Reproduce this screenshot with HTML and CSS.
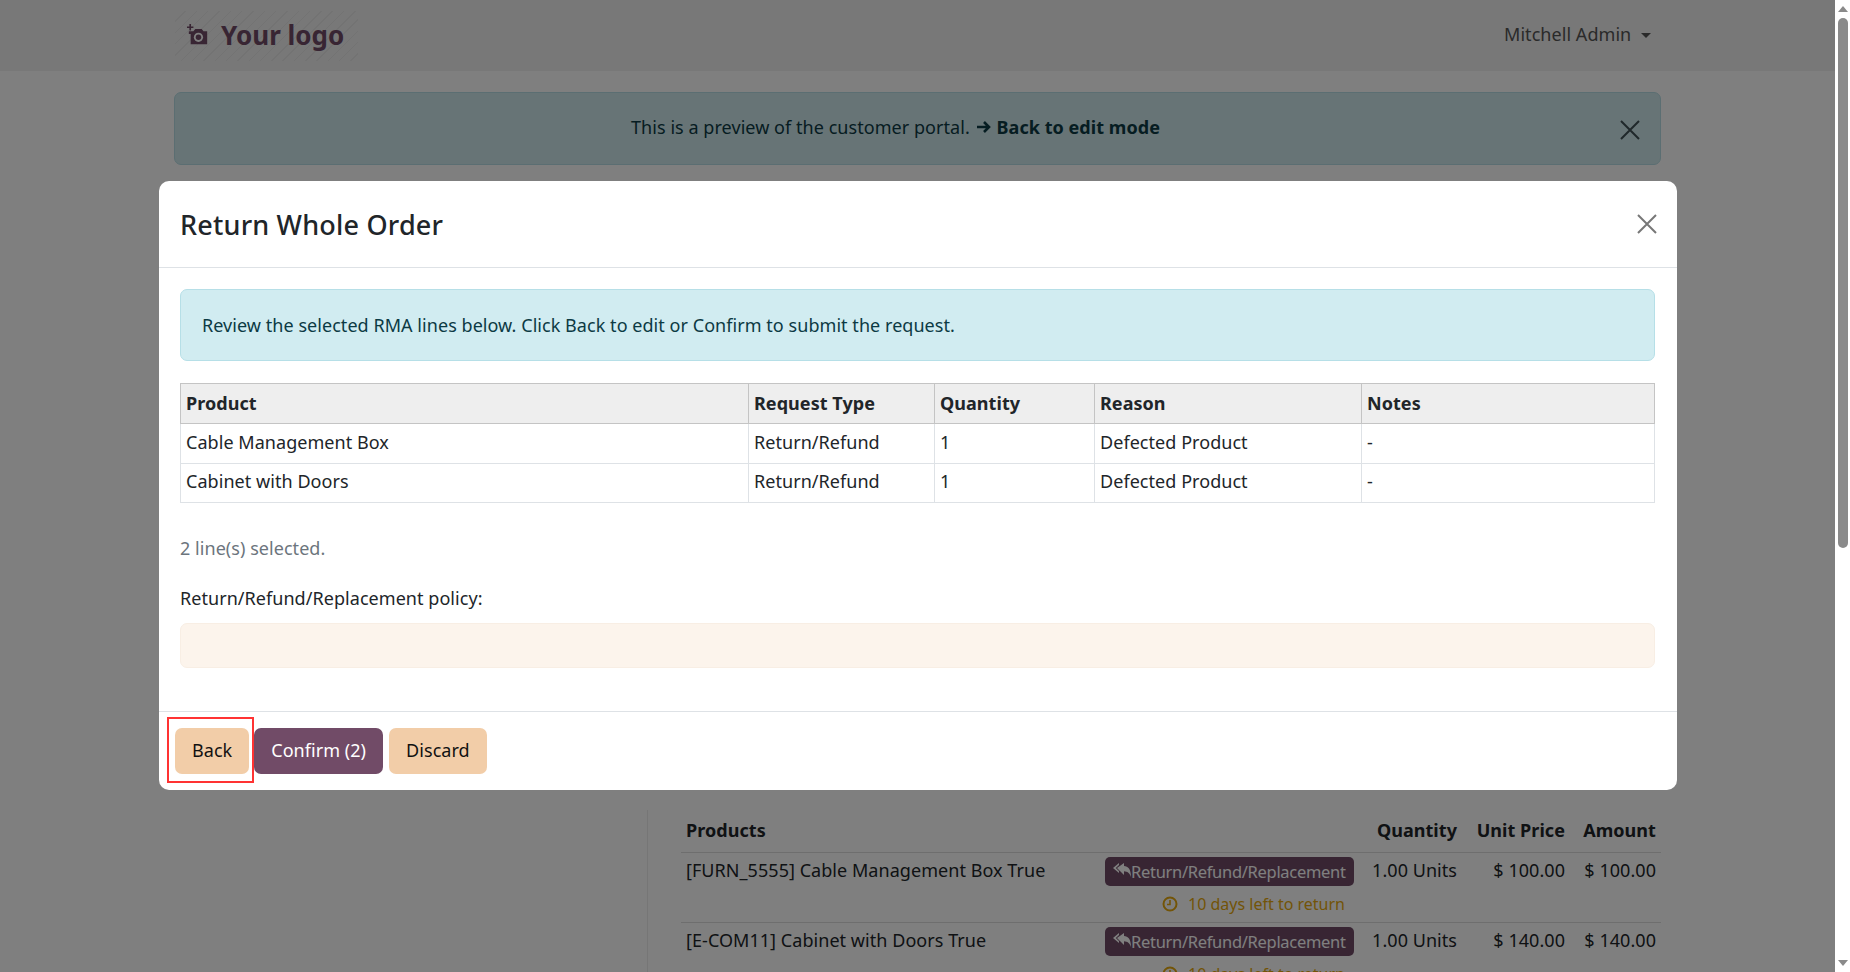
FILE: index.html
```html
<!DOCTYPE html>
<html>
<head>
    <title>Return Whole Order</title>
    <link rel="stylesheet" href="styles.css">
</head>
<body>
    <div class="viewport">
        <div class="page">
            <header class="navbar">
                <div class="logo">
                    <svg class="logo-icon" viewBox="0 0 24 24">
                        <path d="M2 8h5l2-2.500h7l2 2.500h4v14H4v-11H2z" fill="#714b67"/>
                        <path d="M0 3.500h7M3.500 0v7" stroke="#714b67" stroke-width="1.800" fill="none"/>
                        <circle cx="12.500" cy="14.500" r="5" fill="#fff"/>
                        <circle cx="12.500" cy="14.500" r="3" fill="#714b67"/>
                    </svg>
                    <span>Your logo</span>
                </div>
                <div class="user-menu">Mitchell Admin <span class="caret"></span></div>
            </header>

            <div class="preview-alert">
                <span>This is a preview of the customer portal.</span>
                <a class="preview-link">
                    <svg class="arrow-icon" viewBox="0 0 16 14"><path d="M1 7h12M8 2l5 5-5 5" stroke="#0c3a44" stroke-width="2.600" fill="none"/></svg>
                    Back to edit mode
                </a>
                <svg class="close-icon alert-close" viewBox="0 0 20 20"><path d="M1 1l18 18M19 1L1 19" stroke="#1d2b30" stroke-width="2" fill="none"/></svg>
            </div>

            <div class="order-section">
                <table class="order-table">
                    <thead>
                        <tr>
                            <th class="col-name">Products</th>
                            <th class="col-action"></th>
                            <th class="num col-qty">Quantity</th>
                            <th class="num col-price">Unit Price</th>
                            <th class="num col-amount">Amount</th>
                        </tr>
                    </thead>
                    <tbody>
                        <tr>
                            <td>[FURN_5555] Cable Management Box True</td>
                            <td class="col-return">
                                <span class="return-btn">
                                    <svg class="reply-icon" viewBox="0 0 18 16"><path d="M6 1v2L2.800 6 6 9v2L0 6zM11 1v3c4 .3 7 3 7 11-1.300-4-3.500-5.500-7-5.700V13L4 6z" fill="#fff"/></svg>Return/Refund/Replacement
                                </span>
                                <div class="days-left">
                                    <svg class="clock-icon" viewBox="0 0 16 16"><circle cx="8" cy="8" r="6.500" stroke="#e6a90e" stroke-width="2" fill="none"/><path d="M8 4v4.500H5" stroke="#e6a90e" stroke-width="1.600" fill="none"/></svg>
                                    10 days left to return
                                </div>
                            </td>
                            <td class="num">1.00 Units</td>
                            <td class="num">$ 100.00</td>
                            <td class="num">$ 100.00</td>
                        </tr>
                        <tr>
                            <td>[E-COM11] Cabinet with Doors True</td>
                            <td class="col-return">
                                <span class="return-btn">
                                    <svg class="reply-icon" viewBox="0 0 18 16"><path d="M6 1v2L2.800 6 6 9v2L0 6zM11 1v3c4 .3 7 3 7 11-1.300-4-3.500-5.500-7-5.700V13L4 6z" fill="#fff"/></svg>Return/Refund/Replacement
                                </span>
                                <div class="days-left">
                                    <svg class="clock-icon" viewBox="0 0 16 16"><circle cx="8" cy="8" r="6.500" stroke="#e6a90e" stroke-width="2" fill="none"/><path d="M8 4v4.500H5" stroke="#e6a90e" stroke-width="1.600" fill="none"/></svg>
                                    10 days left to return
                                </div>
                            </td>
                            <td class="num">1.00 Units</td>
                            <td class="num">$ 140.00</td>
                            <td class="num">$ 140.00</td>
                        </tr>
                    </tbody>
                </table>
            </div>

            <div class="backdrop"></div>

            <div class="modal">
                <div class="modal-header">
                    <h4>Return Whole Order</h4>
                    <svg class="close-icon" viewBox="0 0 20 20"><path d="M1 1l18 18M19 1L1 19" stroke="#777" stroke-width="2" fill="none"/></svg>
                </div>
                <div class="modal-body">
                    <div class="info-alert">Review the selected RMA lines below. Click Back to edit or Confirm to submit the request.</div>
                    <table class="lines-table">
                        <thead>
                            <tr>
                                <th class="col-product">Product</th>
                                <th class="col-type">Request Type</th>
                                <th class="col-quantity">Quantity</th>
                                <th class="col-reason">Reason</th>
                                <th>Notes</th>
                            </tr>
                        </thead>
                        <tbody>
                            <tr>
                                <td>Cable Management Box</td>
                                <td>Return/Refund</td>
                                <td>1</td>
                                <td>Defected Product</td>
                                <td>-</td>
                            </tr>
                            <tr>
                                <td>Cabinet with Doors</td>
                                <td>Return/Refund</td>
                                <td>1</td>
                                <td>Defected Product</td>
                                <td>-</td>
                            </tr>
                        </tbody>
                    </table>
                    <p class="selected-count">2 line(s) selected.</p>
                    <p class="policy-label">Return/Refund/Replacement policy:</p>
                    <div class="policy-box"></div>
                </div>
                <div class="modal-footer">
                    <button class="btn btn-secondary btn-back">Back</button>
                    <button class="btn btn-primary">Confirm (2)</button>
                    <button class="btn btn-secondary">Discard</button>
                </div>
            </div>
        </div>

        <div class="scrollbar">
            <span class="scroll-arrow scroll-up"></span>
            <div class="scroll-track"><div class="scroll-thumb"></div></div>
            <span class="scroll-arrow scroll-down"></span>
        </div>
    </div>
</body>
</html>
```

FILE: styles.css
```css
html, body {
    margin: 0;
    padding: 0;
    height: 100%;
    overflow: hidden;
}

body {
    font-family: "Noto Sans", "Open Sans", sans-serif;
    font-size: 18px;
    letter-spacing: 0.05px;
    color: #212529;
    background-color: #fff;
}

.viewport {
    display: flex;
    height: 972px;
}

.page {
    position: relative;
    flex: 1;
    overflow: hidden;
}

.backdrop {
    position: absolute;
    top: 0;
    left: 0;
    right: 0;
    bottom: 0;
    background-color: rgba(0, 0, 0, 0.5);
}

/* top bar */
.navbar {
    height: 71px;
    background-color: #f0f0f0;
    display: flex;
    align-items: center;
    justify-content: space-between;
    padding: 0 184px 0 175px;
    box-sizing: border-box;
}

.logo {
    display: flex;
    align-items: center;
    gap: 12px;
    width: 183px;
    height: 50px;
    box-sizing: border-box;
    padding: 0 0 2px 12px;
    font-size: 26px;
    font-weight: 700;
    color: #714b67;
    letter-spacing: 0;
    white-space: nowrap;
    background-image: repeating-linear-gradient(135deg, transparent 0, transparent 7px, #e6e6e6 7px, #e6e6e6 8px);
}

.logo-icon {
    width: 22px;
    height: 22px;
}

.user-menu {
    color: #555;
    margin-top: -4px;
}

.caret {
    display: inline-block;
    margin-left: 5px;
    vertical-align: 3px;
    border-top: 5px solid #555;
    border-left: 5px solid transparent;
    border-right: 5px solid transparent;
}

/* preview banner */
.preview-alert {
    position: relative;
    margin: 21px 174px 0 174px;
    height: 73px;
    box-sizing: border-box;
    background-color: #cfe8ec;
    border: 1px solid #b6dde4;
    border-radius: 7px;
    display: flex;
    align-items: center;
    justify-content: center;
    gap: 6px;
    padding: 0 44px 3px 0;
    color: #0c3a44;
}

.preview-link {
    font-weight: 700;
}

.arrow-icon {
    width: 16px;
    height: 14px;
}

.close-icon {
    width: 20px;
    height: 20px;
}

.alert-close {
    position: absolute;
    right: 20px;
    top: 27px;
    opacity: 0.8;
}

/* order lines under the dialog */
.order-section {
    margin: 0 174px 0 647px;
    padding: 0 0 0 33px;
    height: 806px;
    box-sizing: border-box;
    border-left: 1px solid #ececec;
}

.order-table {
    margin-top: 645px;
    width: 980px;
    border-collapse: collapse;
    table-layout: fixed;
}

.order-table th {
    text-align: left;
    height: 40px;
    padding: 0 5px 2px;
    border-bottom: 1px solid #ddd;
}

.order-table td {
    padding: 5px 5px 0;
    height: 70px;
    vertical-align: top;
    border-bottom: 1px solid #ddd;
    box-sizing: border-box;
    white-space: nowrap;
}

.col-name {
    width: 409px;
}

.col-action {
    width: 247px;
}

.col-qty {
    width: 95px;
}

.col-price {
    width: 98px;
}

.col-amount {
    width: 81px;
}

.order-table .num {
    text-align: right;
    white-space: nowrap;
}

.order-table .col-return {
    text-align: right;
    padding-top: 4px;
}

.return-btn {
    display: inline-flex;
    align-items: center;
    height: 29px;
    box-sizing: border-box;
    padding: 0 8px;
    background-color: #714b67;
    color: #fff;
    border-radius: 5px;
    font-size: 16.500px;
    letter-spacing: -0.3px;
}

.reply-icon {
    width: 18px;
    height: 16px;
    margin-top: -3px;
}

.days-left {
    color: #e6a90e;
    font-size: 16px;
    letter-spacing: 0;
    margin-top: 7px;
    margin-right: 7px;
    white-space: nowrap;
}

.clock-icon {
    width: 16px;
    height: 16px;
    vertical-align: -2px;
    margin-right: 6px;
}

/* dialog */
.modal {
    position: absolute;
    top: 181px;
    left: 159px;
    width: 1518px;
    height: 609px;
    background-color: #fff;
    border-radius: 10px;
    display: flex;
    flex-direction: column;
}

.modal-header {
    height: 87px;
    box-sizing: border-box;
    display: flex;
    align-items: center;
    justify-content: space-between;
    padding: 0 20px 0 21px;
    border-bottom: 1px solid #dee2e6;
}

.modal-header h4 {
    margin: 0;
    font-size: 27px;
    font-weight: 500;
    letter-spacing: 0.2px;
}

.modal-body {
    flex: 1;
    padding: 21px 22px 0 21px;
}

.info-alert {
    height: 72px;
    box-sizing: border-box;
    display: flex;
    align-items: center;
    padding: 0 21px;
    background-color: #d1ecf1;
    border: 1px solid #b6dfe7;
    border-radius: 7px;
    color: #0c3a44;
}

.lines-table {
    width: 100%;
    margin-top: 22px;
    border-collapse: collapse;
    table-layout: fixed;
}

.lines-table th, .lines-table td {
    text-align: left;
    box-sizing: border-box;
    padding: 0 5px 2px;
    height: 40px;
    border: 1px solid #dee2e6;
}

.lines-table td {
    height: 39.500px;
    padding-bottom: 3px;
}

.lines-table th {
    background-color: #eee;
    border-color: #c4c4c4;
}

.col-product {
    width: 568px;
}

.col-type {
    width: 186px;
}

.col-quantity {
    width: 160px;
}

.col-reason {
    width: 267px;
}

.selected-count {
    margin: 33px 0 0;
    color: #6c757d;
}

.policy-label {
    margin: 26px 0 0;
}

.policy-box {
    margin-top: 13px;
    height: 45px;
    background-color: #fcf4ec;
    border: 1px solid #f8eee4;
    border-radius: 7px;
    box-sizing: border-box;
}

.modal-footer {
    height: 79px;
    box-sizing: border-box;
    display: flex;
    align-items: center;
    padding: 0 0 0 16px;
    border-top: 1px solid #dee2e6;
}

.btn {
    height: 46px;
    padding: 0 17px 2px;
    border: none;
    border-radius: 7px;
    font-family: inherit;
    font-size: 18px;
    letter-spacing: 0.05px;
    color: #111;
}

.btn-primary {
    background-color: #714b67;
    color: #fff;
    margin-right: 6px;
}

.btn-secondary {
    background-color: #f2cda8;
}

.btn-back {
    margin-right: 5px;
    position: relative;
}

.btn-back::after {
    content: "";
    position: absolute;
    top: -11px;
    bottom: -9px;
    left: -8px;
    right: -5px;
    border: 2px solid #f33;
}

/* fake window scrollbar */
.scrollbar {
    width: 15px;
    background-color: #fff;
    display: flex;
    flex-direction: column;
    align-items: center;
}

.scroll-arrow {
    width: 0;
    height: 0;
    margin: 6px 0;
    border-left: 5px solid transparent;
    border-right: 5px solid transparent;
}

.scroll-up {
    border-bottom: 6px solid #8a8a8a;
}

.scroll-down {
    border-top: 6px solid #8a8a8a;
}

.scroll-track {
    flex: 1;
    width: 100%;
}

.scroll-thumb {
    width: 10px;
    height: 530px;
    margin: 0 auto;
    background-color: #8a8a8a;
    border-radius: 5px;
}
```
